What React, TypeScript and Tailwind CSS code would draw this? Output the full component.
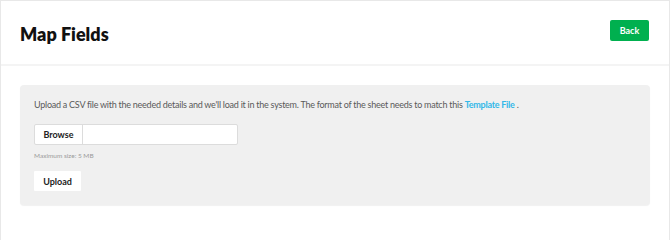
import React from "react";

export default function App() {
  return (
    <div
      className="w-[670px] h-[240px] bg-white border-x border-t border-[#e8e8e8] box-border"
      style={{ fontFamily: "Lato, 'Open Sans', sans-serif" }}
    >
      <div className="h-[65px] pl-[19px] pr-[20px] pt-[19px] flex items-start justify-between border-b-2 border-[#f4f4f4] box-border">
        <h1 className="mt-[3px] text-[18px] leading-[22px] font-extrabold text-[#111] tracking-[0px]">Map Fields</h1>
        <button className="w-[39px] h-[21px] rounded-[2px] bg-[#00b04f] text-white text-[9px] font-bold leading-none">
          Back
        </button>
      </div>
      <div className="mx-[19px] mt-[19px] h-[120px] rounded-[4px] bg-[#f0f0f0] px-[14px] pt-[14px] shadow-[0_1px_1px_rgba(0,0,0,0.06)]">
        <p className="text-[9px] leading-[12px] text-[#5a5a5a] tracking-[-0.25px]">
          Upload a CSV file with the needed details and we'll load it in the system. The format of the sheet needs to match this{" "}
          <span className="text-[#33b8e8] font-bold">Template File</span> .
        </p>
        <div className="mt-[13px] flex w-[204px] h-[21px] border border-[#dcdcdc] rounded-[2px] bg-white box-border">
          <div className="w-[48px] h-full flex items-center justify-center border-r border-[#dcdcdc] text-[9px] font-bold text-[#222]">
            Browse
          </div>
          <div className="flex-1" />
        </div>
        <div className="mt-[7px] text-[6.5px] leading-[8px] text-[#9a9a9a]">Maximum size: 5 MB</div>
        <button className="mt-[11px] w-[47px] h-[20px] bg-white text-[9px] font-bold text-[#222] leading-none rounded-[1px]">
          Upload
        </button>
      </div>
    </div>
  );
}
